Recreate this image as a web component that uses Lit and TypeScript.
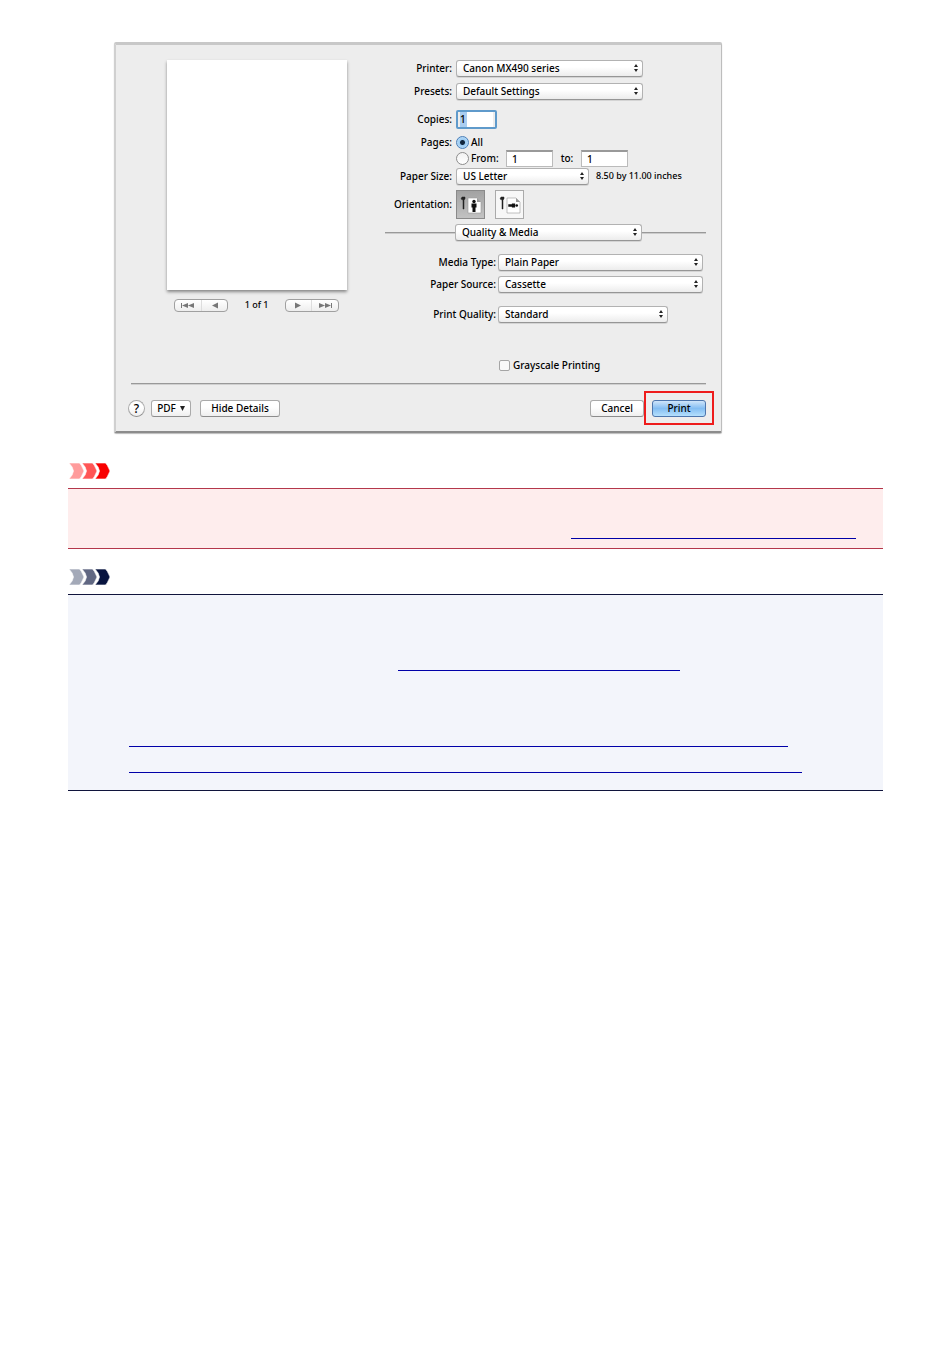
import { LitElement, html, svg, css } from "lit";
import { customElement, property } from "lit/decorators.js";

@customElement("pop-up")
class PopUp extends LitElement {
  @property() value = "";
  @property() label = "";
  static styles = css`
    :host { display: grid; height: 17px; min-width: 0; }
    select, svg { grid-area: 1 / 1; }
    select {
      appearance: none; width: 100%; height: 17px; margin: 0; padding: 0 18px 0 6px;
      border: 1px solid #b2b2b2; border-bottom-color: #969696; border-radius: 3px;
      background: linear-gradient(#fff 40%, #ececec);
      box-shadow: 0 1px 0 #d4d4d4;
      font: 500 10px/15px "Noto Sans", sans-serif; color: #000;
    }
    svg { justify-self: end; align-self: center; margin-right: 4px; pointer-events: none; }
  `;
  render() {
    return html`<select aria-label=${this.label}><option>${this.value}</option></select>
      <svg width="6" height="8" viewBox="0 0 6 8" fill="#222"><path d="M3 0 5 3H1zM3 8 1 5h4z" /></svg>`;
  }
}

@customElement("note-mark")
class NoteMark extends LitElement {
  @property({ type: Array }) colors: string[] = [];
  static styles = css`:host, svg { display: block; }`;
  render() {
    return html`<svg width="43" height="16" viewBox="0 0 43 16">
      ${this.colors.map((c, i) => svg`<path transform="translate(${i * 13} 0)" fill=${c} d="M1 0H11.500Q13 1 16 8Q13 15 11.500 16H1Q5 12 5.500 8Q5 4 1 0Z" stroke="#fff" stroke-width=".6" />`)}
    </svg>`;
  }
}

@customElement("app-root")
class AppRoot extends LitElement {
  static styles = css`
    :host { display: block; background: #fff; font: 500 10px/16px "Noto Sans", sans-serif; color: #000; }
    * { box-sizing: border-box; }
    main { padding: 42px 67px 0 68px; }
    .dialog {
      max-width: 608px; margin: 0 0 30px 46px; padding: 14px 15px 6px 12px;
      background: #ededed; border: 2px solid #d0d0d0; border-top: 3px solid #c8c8c8;
      border-right: 1px solid #bdbdbd; border-bottom: 2px solid #8c8c8c; border-radius: 2px;
      box-shadow: 0 1px 1px #bbb;
    }
    .panes { display: flex; justify-content: space-between; padding-left: 39px; }
    .preview { width: 180px; padding-top: 1px; }
    .sheet { height: 230px; background: #fff; box-shadow: 0 2px 3px #888; }
    .pager { display: flex; justify-content: space-between; align-items: center; padding: 7px 8px 0 7px; font-size: 9px; }
    .seg { display: flex; height: 13px; width: 54px; border: 1px solid #a0a0a0; border-radius: 4px; background: linear-gradient(#fff, #eee); }
    .seg button { flex: 1; display: grid; place-items: center; padding: 0; border: 0; background: none; }
    .seg button + button { border-left: 1px solid #ddd; }
    form { width: 321px; margin: 0; }
    .row { display: flex; align-items: center; height: 18px; gap: 4px; white-space: nowrap; }
    .row > .name { width: 67px; text-align: right; flex: none; }
    .row.media > .name { width: 111px; }
    .row.media { gap: 2px; }
    .gap-s { margin-top: 4px; }
    .gap-p { margin-top: 5px; }
    .gap-m { margin-top: 10px; }
    .gap-l { margin-top: 12px; }
    .gap-xl { margin-top: 33px; }
    .short { height: 14px; margin-top: 7px; }
    .wide { width: 187px; }
    .mid { width: 133px; }
    .full { width: 205px; }
    .quality { width: 170px; }
    .small { font-size: 9px; margin-left: 3px; }
    input { margin: 0; font: inherit; color: inherit; flex: none; }
    input[type="text"] { width: 47px; height: 17px; padding: 0 5px; border: 1px solid #bbb; border-top: 2px solid #999; background: #fff; outline: 0; }
    input[type="text"].copies { width: 41px; height: 19px; padding: 0 2px; border: 2px solid #5f9acb; border-radius: 2px; background: linear-gradient(90deg, #a9cdf0 7px, #fff 7px) content-box; }
    input[type="radio"] { appearance: none; width: 13px; height: 13px; border: 1px solid #8d8d8d; border-radius: 50%; background: linear-gradient(#f2f2f2, #fff); }
    input[type="radio"]:checked { border-color: #4b7fb8; background: radial-gradient(circle, #12263c 2px, #9ccbf2 3px, #c9e6fb); }
    .opt { display: flex; align-items: center; gap: 2px; }
    .from { width: 46px; }
    .to { width: 20px; text-align: center; }
    .orient { height: 30px; }
    .orient button { width: 29px; height: 29px; padding: 0; border: 1px solid #aaa; background: #f7f7f7; display: grid; place-items: center; }
    .orient button.on { background: linear-gradient(#a2a2a2, #c2c2c2); border-color: #8a8a8a; }
    .orient .pair { display: flex; gap: 10px; }
    .rule { height: 1px; flex: 1; background: #999; box-shadow: 0 1px 0 #ccc; }
    .section { gap: 0; }
    .section .lead { flex: none; width: 70px; }
    .check { gap: 3px; padding-left: 114px; }
    input[type="checkbox"] { appearance: none; width: 11px; height: 11px; border: 1px solid #a5a5a5; border-radius: 2px; background: #f8f8f8; }
    hr { height: 1px; margin: 9px 0 7px 3px; border: 0; background: #999; box-shadow: 0 1px 0 #d0d0d0; }
    footer { display: flex; align-items: center; margin-right: -8px; }
    .btn { height: 17px; padding: 0; font: inherit; line-height: 15px; color: inherit; border: 1px solid #aaa; border-bottom-color: #8c8c8c; border-radius: 3px; background: linear-gradient(#fff 40%, #efefef); }
    .help { width: 17px; border-radius: 50%; font-size: 12px; margin-right: 6px; }
    .pdf { width: 40px; display: flex; align-items: center; justify-content: center; gap: 4px; margin-right: 9px; }
    .hide { width: 80px; }
    .cancel { width: 54px; margin-left: auto; }
    .mark { display: grid; place-items: center; height: 34px; width: 70px; border: 2px solid #ee1c1c; }
    .print { width: 54px; border-color: #4d76ad; background: linear-gradient(#cfe5fa, #83bdf2 50%, #b4e0fd); }
    .note { display: flex; flex-direction: column; margin: 9px 0 20px; border: solid #b4374b; border-width: 1px 0; background: #feeded; padding: 24px 27px 9px; }
    .note.blue { border-color: #10143c; background: #f3f5fb; padding: 50px 61px 17px; }
    .note a { display: block; height: 26px; max-width: 100%; border-bottom: 1px solid #0000a8; }
    .l1 { width: 285px; align-self: flex-end; }
    .l2 { width: 282px; margin: 0 0 50px 269px; }
    .l3 { width: 659px; }
    .l4 { width: 673px; }
  `;

  render() {
    const orient = (figure: string) => svg`
      <path d="M4 8 5 6 8 6 8 8 7 9V18H6V9z" fill="#222" stroke="#222" stroke-width=".5" />
      <path d="M11 7h9l4 4v11H11z" fill="#fff" stroke="#999" stroke-width=".6" />
      <path d="M20 7v4h4z" fill="#999" />
      <g transform=${figure} fill="#111"><circle cx="17" cy="10.500" r="1.700" /><path d="M14.500 12.500h5v4h-1v4.500h-3v-4.500h-1z" /></g>`;
    return html`<main>
      <section class="dialog">
        <div class="panes">
          <div class="preview">
            <div class="sheet"></div>
            <div class="pager">
              <div class="seg">
                <button aria-label="First page"><svg width="14" height="7" fill="#777"><path d="M0 1h1v5H0zM7 1v5L1 3.500zM13 1v5L7 3.500z" /></svg></button>
                <button aria-label="Previous page"><svg width="7" height="7" fill="#777"><path d="M7 .5v6L1 3.500z" /></svg></button>
              </div>
              <span>1 of 1</span>
              <div class="seg">
                <button aria-label="Next page"><svg width="7" height="7" fill="#777"><path d="M0 .5v6l6-3z" /></svg></button>
                <button aria-label="Last page"><svg width="14" height="7" fill="#777"><path d="M13 1h1v5h-1zM1 1v5l6-2.500zM7 1v5l6-2.500z" /></svg></button>
              </div>
            </div>
          </div>
          <form>
            <div class="row"><span class="name">Printer:</span><pop-up class="wide" label="Printer" value="Canon MX490 series"></pop-up></div>
            <div class="row gap-p"><span class="name">Presets:</span><pop-up class="wide" label="Presets" value="Default Settings"></pop-up></div>
            <div class="row gap-m"><label class="name" for="copies">Copies:</label><input class="copies" id="copies" type="text" value="1" /></div>
            <div class="row short"><span class="name">Pages:</span><label class="opt"><input type="radio" name="pages" checked />All</label></div>
            <div class="row"><span class="name"></span><label class="opt from"><input type="radio" name="pages" />From:</label>
              <input type="text" aria-label="From" value="1" /><label class="to" for="to">to:</label><input type="text" id="to" value="1" /></div>
            <div class="row"><span class="name">Paper Size:</span><pop-up class="mid" label="Paper Size" value="US Letter"></pop-up><span class="small">8.50 by 11.00 inches</span></div>
            <div class="row orient gap-s"><span class="name">Orientation:</span><div class="pair">
              <button type="button" class="on" aria-label="Portrait"><svg width="27" height="27">${orient("")}</svg></button>
              <button type="button" aria-label="Landscape"><svg width="27" height="27">${orient("translate(3.500 2.500) scale(.8) rotate(90 17 15)")}</svg></button></div></div>
            <div class="row section gap-s"><span class="rule lead"></span><pop-up class="wide" label="Section" value="Quality &amp; Media"></pop-up><span class="rule"></span></div>
            <div class="row media gap-l"><span class="name">Media Type:</span><pop-up class="full" label="Media Type" value="Plain Paper"></pop-up></div>
            <div class="row media gap-s"><span class="name">Paper Source:</span><pop-up class="full" label="Paper Source" value="Cassette"></pop-up></div>
            <div class="row media gap-l"><span class="name">Print Quality:</span><pop-up class="quality" label="Print Quality" value="Standard"></pop-up></div>
            <label class="row check gap-xl"><input type="checkbox" />Grayscale Printing</label>
          </form>
        </div>
        <hr />
        <footer>
          <button class="btn help">?</button>
          <button class="btn pdf">PDF <svg width="5" height="5" fill="#222"><path d="M0 0h5L2.500 5z" /></svg></button>
          <button class="btn hide">Hide Details</button>
          <button class="btn cancel">Cancel</button>
          <div class="mark"><button class="btn print">Print</button></div>
        </footer>
      </section>
      <note-mark .colors=${["#ff9c9c", "#ff5555", "#f80000"]}></note-mark>
      <section class="note"><a class="l1" href="#"></a></section>
      <note-mark .colors=${["#a3a9b8", "#606782", "#08143f"]}></note-mark>
      <section class="note blue"><a class="l2" href="#"></a><a class="l3" href="#"></a><a class="l4" href="#"></a></section>
    </main>`;
  }
}
